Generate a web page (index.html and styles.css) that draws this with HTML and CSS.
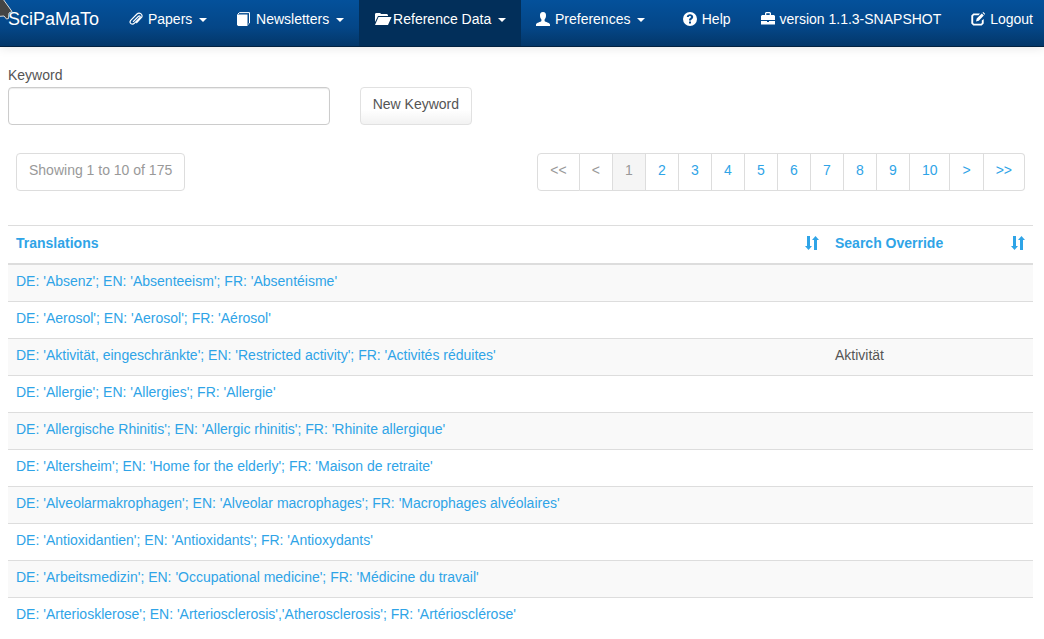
FILE: index.html
```html
<!DOCTYPE html>
<html lang="en">
<head>
<meta charset="utf-8">
<title>SciPaMaTo - Keywords</title>
<meta name="viewport" content="width=device-width, initial-scale=1">
<link rel="stylesheet" href="styles.css">
</head>
<body>
<svg class="sprite" aria-hidden="true">
  <symbol id="sort" viewBox="0 0 14 14"><path d="M2 0h3v10h2L3.500 14 0 10h2zM9 14h3V4h2L10.500 0 7 4h2z"/></symbol>
</svg>
<header class="navbar">
  <svg class="pointer" viewBox="0 0 14 22" aria-hidden="true"><path d="M-2-3 3-1 12 11.500 9 13 8.500 18.500 6.500 19 4 16-2 16.500z"/></svg>
  <a class="brand" href="#">SciPaMaTo</a>
  <nav class="menu">
    <button class="nav-item" type="button"><svg class="icon" viewBox="0 0 14 14"><path class="line clip" d="M4 9.800 9.300 4.500c1.300-1.300 2.600 0 1.400 1.300L5.500 11.200C3.200 13.500-.5 11 1.700 8.300L8 2C10.500-.4 14.800 2.800 12.300 5.700L7.300 11"/></svg> Papers <span class="caret"></span></button>
    <button class="nav-item" type="button"><svg class="icon" viewBox="0 0 14 14"><path d="M0 2.500h10.500V14H1.200L0 13z"/><path class="line" d="M.7 2.300 2.500.6h10V11l-1.200 1.200"/></svg> Newsletters <span class="caret"></span></button>
    <button class="nav-item active" type="button"><svg class="icon folder" viewBox="0 0 18 14"><path d="M1 3V1.700L2 1h4l1.200 1H13l1 1v1H4L1 10zM4.500 5H17.600L14 13H1z"/></svg>Reference Data <span class="caret"></span></button>
    <button class="nav-item" type="button"><svg class="icon" viewBox="0 0 14 14"><path d="M7 0C4.800 0 3.800 1.500 4 3.700 4 5.500 4.800 6.700 5.400 7.500v1.400C4.700 10 .5 10.300 0 12.500V14h14v-1.500c-.5-2.200-4.700-2.500-5.400-3.600V7.500C9.200 6.700 10 5.500 10 3.700 10.200 1.500 9.200 0 7 0z"/></svg> Preferences <span class="caret"></span></button>
  </nav>
  <nav class="menu menu-right">
    <a class="nav-item" href="#"><svg class="icon" viewBox="0 0 14 14"><path fill-rule="evenodd" d="M7 0a7 7 0 1 1 0 14A7 7 0 0 1 7 0zM3.800 5h2C5.800 3.700 8 3.700 8 5 8 6 6 6 6 8.500h2C8 7 10.200 6.800 10.200 4.900 10.200 1.500 3.800 1.500 3.800 5zM6 9.500v2h2v-2z"/></svg> Help</a>
    <a class="nav-item" href="#"><svg class="icon" viewBox="0 0 14 14"><path fill-rule="evenodd" d="M4 3V1l1-1h4l1 1v2h3l1 1v4H0V4l1-1zM5.300 3h3.400V1.300H5.300zM0 9h6v1h2V9h6v3.500H0z"/></svg> version 1.1.3-SNAPSHOT</a>
    <a class="nav-item" href="#"><svg class="icon" viewBox="0 0 14 14"><path d="M9 1.500 7.500 3.200H3L2.200 4v7l.8.800h7l.8-.8V8.500L12.700 7v4.500l-2 2H2.300l-2-2V3.500l2-2zM5 9.500 5.700 6.600 10.800 1.500l2 2L7.800 8.700zM11.500.8l.8-.8 2 2-.8.800z"/></svg> Logout</a>
  </nav>
</header>
<main class="content">
  <form class="filter">
    <label class="filter-label" for="keyword">Keyword</label>
    <input class="field" id="keyword" type="text">
    <button class="btn" type="button">New Keyword</button>
  </form>
  <div class="pager">
    <span class="summary">Showing 1 to 10 of 175</span>
    <nav class="pages" aria-label="Pages">
      <span class="page off">&lt;&lt;</span>
      <span class="page off">&lt;</span>
      <span class="page off current">1</span>
      <a class="page" href="#">2</a>
      <a class="page" href="#">3</a>
      <a class="page" href="#">4</a>
      <a class="page" href="#">5</a>
      <a class="page" href="#">6</a>
      <a class="page" href="#">7</a>
      <a class="page" href="#">8</a>
      <a class="page" href="#">9</a>
      <a class="page" href="#">10</a>
      <a class="page" href="#">&gt;</a>
      <a class="page" href="#">&gt;&gt;</a>
    </nav>
  </div>
  <table class="keywords">
    <thead>
      <tr>
        <th><a class="sort-link" href="#">Translations <svg class="sort"><use href="#sort"/></svg></a></th>
        <th class="override"><a class="sort-link" href="#">Search Override <svg class="sort"><use href="#sort"/></svg></a></th>
      </tr>
    </thead>
    <tbody>
      <tr><td><a href="#">DE: 'Absenz'; EN: 'Absenteeism'; FR: 'Absentéisme'</a></td><td></td></tr>
      <tr><td><a href="#">DE: 'Aerosol'; EN: 'Aerosol'; FR: 'Aérosol'</a></td><td></td></tr>
      <tr><td><a href="#">DE: 'Aktivität, eingeschränkte'; EN: 'Restricted activity'; FR: 'Activités réduites'</a></td><td>Aktivität</td></tr>
      <tr><td><a href="#">DE: 'Allergie'; EN: 'Allergies'; FR: 'Allergie'</a></td><td></td></tr>
      <tr><td><a href="#">DE: 'Allergische Rhinitis'; EN: 'Allergic rhinitis'; FR: 'Rhinite allergique'</a></td><td></td></tr>
      <tr><td><a href="#">DE: 'Altersheim'; EN: 'Home for the elderly'; FR: 'Maison de retraite'</a></td><td></td></tr>
      <tr><td><a href="#">DE: 'Alveolarmakrophagen'; EN: 'Alveolar macrophages'; FR: 'Macrophages alvéolaires'</a></td><td></td></tr>
      <tr><td><a href="#">DE: 'Antioxidantien'; EN: 'Antioxidants'; FR: 'Antioxydants'</a></td><td></td></tr>
      <tr><td><a href="#">DE: 'Arbeitsmedizin'; EN: 'Occupational medicine'; FR: 'Médicine du travail'</a></td><td></td></tr>
      <tr><td><a href="#">DE: 'Arteriosklerose'; EN: 'Arteriosclerosis','Atherosclerosis'; FR: 'Artériosclérose'</a></td><td></td></tr>
    </tbody>
  </table>
</main>
</body>
</html>
```
FILE: styles.css
```css
* { box-sizing: border-box; }
body {
  margin: 0;
  background: #fff;
  color: #555;
  font: 14px/20px "Liberation Sans", Arial, sans-serif;
}
a { color: #2fa4e7; text-decoration: none; }
button, input { font: inherit; color: inherit; }
.sprite { display: none; }

.navbar {
  position: relative;
  display: flex;
  background: linear-gradient(#04519b, #044687 60%, #033769);
  border-bottom: 1px solid #022241;
  box-shadow: 0 1px 10px rgba(0, 0, 0, .1);
}
.pointer {
  position: absolute;
  top: 0;
  left: 0;
  width: 14px;
  height: 22px;
  fill: #444;
  stroke: #ddd;
}
.brand {
  padding: 9px 15px 17px 8px;
  color: #fff;
  font-size: 18px;
}
.menu { display: flex; }
.menu-right { margin-left: auto; }
.nav-item {
  padding: 9px 15px 17px;
  border: 0;
  background: none;
  color: #fff;
  white-space: nowrap;
}
.menu-right .nav-item:last-child { padding-right: 11px; }
.nav-item.active { background: #022f5a; }
.icon {
  width: 14px;
  height: 14px;
  margin-right: 1px;
  vertical-align: -2px;
  fill: #fff;
}
.folder { width: 18px; }
.line { fill: none; stroke: #fff; }
.clip { stroke-width: 1.2; }
.caret {
  display: inline-block;
  margin-left: 3px;
  border: 4px solid transparent;
  border-top-color: #fff;
  border-bottom: 0;
  vertical-align: middle;
}

.content { padding: 18px 11px 0 8px; }
.filter {
  display: grid;
  grid-template-columns: repeat(3, 1fr);
  column-gap: 30px;
  row-gap: 2px;
}
.filter-label { grid-column: 1 / -1; }
.field {
  width: 100%;
  height: 38px;
  padding: 8px 12px;
  border: 1px solid #ccc;
  border-radius: 4px;
  box-shadow: inset 0 1px 1px rgba(0, 0, 0, .08);
}
.btn {
  justify-self: start;
  padding: 6px 12px 10px;
  border: 1px solid #e1e1e1;
  border-radius: 4px;
  background: linear-gradient(#fff, #fff 60%, #f2f2f2);
}

.pager {
  display: flex;
  justify-content: space-between;
  padding: 28px 8px 34px;
}
.summary, .page {
  padding: 6px 12px 10px;
  border: 1px solid #ddd;
}
.summary { border-radius: 4px; color: #999; }
.pages { display: flex; }
.page { min-width: 33px; }
.page + .page { border-left: 0; }
.page:first-child { border-radius: 4px 0 0 4px; }
.page:last-child { border-radius: 0 4px 4px 0; }
.off { color: #999; }
.current { background: #f5f5f5; }

.keywords {
  width: 100%;
  border-spacing: 0;
  border-top: 1px solid #ddd;
}
.keywords th {
  padding: 7px 8px 10px;
  border-bottom: 2px solid #ddd;
  text-align: left;
}
.keywords td {
  height: 37px;
  padding: 6px 8px 10px;
  border-bottom: 1px solid #ddd;
  vertical-align: top;
}
.keywords tr:last-child td { border-bottom: 0; }
.keywords tbody tr:nth-child(odd) { background: #f9f9f9; }
.keywords .override { width: 206px; }
.sort-link { display: flex; justify-content: space-between; align-items: center; }
.sort { width: 14px; height: 14px; fill: #2fa4e7; }
```
